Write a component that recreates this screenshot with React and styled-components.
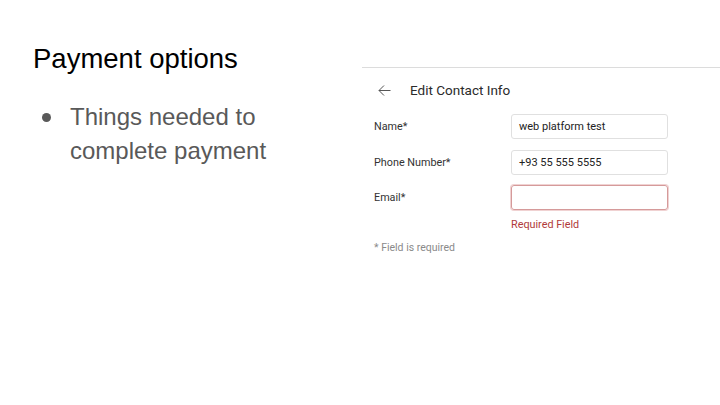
import React from 'react';
import styled, { createGlobalStyle } from 'styled-components';

const GlobalStyle = createGlobalStyle`
  html, body {
    margin: 0;
    padding: 0;
    background: #ffffff;
  }
`;

const Slide = styled.div`
  width: 720px;
  height: 405px;
  display: flex;
  overflow: hidden;
  background: #ffffff;
  font-family: 'Liberation Sans', Arial, sans-serif;
`;

const TextColumn = styled.div`
  width: 362px;
  box-sizing: border-box;
  padding: 42px 0 0 33px;
`;

const Title = styled.h1`
  margin: 0;
  font-size: 27.5px;
  font-weight: 400;
  line-height: 34px;
  color: #000000;
`;

const BulletList = styled.ul`
  margin: 24px 0 0;
  padding: 0;
  list-style: none;
`;

const Bullet = styled.li`
  display: flex;
  gap: 19px;
  max-width: 270px;
  font-size: 24px;
  line-height: 34px;
  color: #595959;

  &::before {
    content: '';
    flex: none;
    width: 9px;
    height: 9px;
    margin: 13px 0 0 9px;
    border-radius: 50%;
    background: #595959;
  }
`;

const ShotPanel = styled.div`
  width: 358px;
  margin-top: 67px;
  border-top: 1px solid #dcdcdc;
  box-sizing: border-box;
  padding-left: 12px;
  font-family: Roboto, 'Liberation Sans', sans-serif;
`;

const Header = styled.div`
  height: 44px;
  display: flex;
  align-items: center;
  gap: 19px;
  padding-left: 4px;
  margin-bottom: 2px;
  font-size: 13.5px;
  color: #2b2b2b;
`;

const FormGrid = styled.div`
  display: grid;
  grid-template-columns: 137px 157px;
  row-gap: 10.5px;
  align-items: center;
`;

const Label = styled.div`
  font-size: 10.8px;
  color: #333333;
`;

const Field = styled.div`
  height: 25px;
  box-sizing: border-box;
  border: 1px solid ${({ $error }) => ($error ? '#d59a9a' : '#e0e0e0')};
  border-radius: 3px;
  box-shadow: ${({ $error }) => ($error ? '0 0 0 1px #f0d2d2' : 'none')};
  padding: 0 7px;
  display: flex;
  align-items: center;
  font-size: 11px;
  color: #222222;
`;

const ErrorText = styled.div`
  grid-column: 2;
  margin-top: -3px;
  font-size: 10.8px;
  color: #b03a3a;
`;

const Footnote = styled.div`
  margin-top: 10px;
  font-size: 10.5px;
  color: #8a8a8a;
`;

const BackArrow = () => (
  <svg width="13" height="11" viewBox="0 0 13 11" fill="none">
    <path d="M12.5 5.5H1 M6 0.5L1 5.5L6 10.5" stroke="#555555" strokeWidth="1" />
  </svg>
);

const fields = [
  { label: 'Name*', value: 'web platform test' },
  { label: 'Phone Number*', value: '+93 55 555 5555' },
  { label: 'Email*', value: '', error: true },
];

const App = () => (
  <>
    <GlobalStyle />
    <Slide>
      <TextColumn>
        <Title>Payment options</Title>
        <BulletList>
          <Bullet>
            <span>Things needed to complete payment</span>
          </Bullet>
        </BulletList>
      </TextColumn>
      <ShotPanel>
        <Header>
          <BackArrow />
          <span>Edit Contact Info</span>
        </Header>
        <FormGrid>
          {fields.map((f) => (
            <React.Fragment key={f.label}>
              <Label>{f.label}</Label>
              <Field $error={f.error}>{f.value}</Field>
            </React.Fragment>
          ))}
          <ErrorText>Required Field</ErrorText>
        </FormGrid>
        <Footnote>* Field is required</Footnote>
      </ShotPanel>
    </Slide>
  </>
);

export default App;
